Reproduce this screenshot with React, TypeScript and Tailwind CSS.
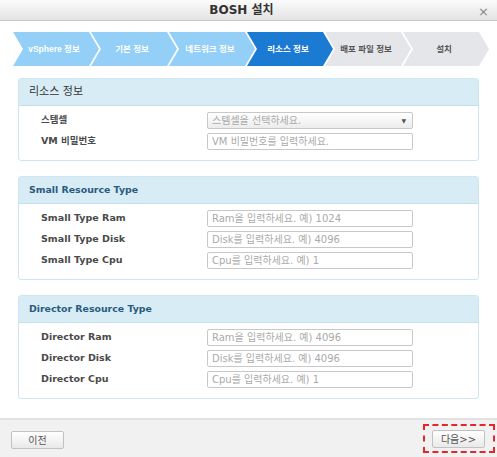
import React from "react";

const FONT = { fontFamily: '"DejaVu Sans", Verdana, "Noto Sans CJK KR", sans-serif' };
const STEPFONT = { fontFamily: '"Liberation Sans", Arial, "Noto Sans CJK KR", sans-serif' };

const steps = [
  { label: "vSphere 정보", state: "done" },
  { label: "기본 정보", state: "done" },
  { label: "네트워크 정보", state: "done" },
  { label: "리소스 정보", state: "active" },
  { label: "배포 파일 정보", state: "todo" },
  { label: "설치", state: "todo" },
];

function Step({ label, state, first }: { label: string; state: string; first: boolean }) {
  const bg =
    state === "done" ? "bg-[#93cff6]" : state === "active" ? "bg-[#1b7bd2]" : "bg-[#e4e6e9]";
  const fg = state === "todo" ? "text-[#555]" : "text-white";
  return (
    <div
      className={`${bg} ${fg} ${first ? "" : "-ml-[10px]"} w-[88px] h-[34px] flex items-center justify-center pl-0 pr-[6px] text-[8.5px] font-bold shrink-0`}
      style={{
        ...STEPFONT,
        clipPath: "polygon(0 0, 76px 0, 86px 50%, 76px 100%, 0 100%, 10px 50%)",
      }}
    >
      {label}
    </div>
  );
}

function Row({ label, placeholder, select }: { label: string; placeholder: string; select?: boolean }) {
  return (
    <div className="flex items-center h-[17px]">
      <div className="w-[188px] text-[9.5px] font-bold text-[#4a4a4a] pl-[22px] shrink-0">{label}</div>
      {select ? (
        <div className="w-[206px] h-[17px] border border-[#c8c8c8] rounded-[2px] bg-gradient-to-b from-white to-[#ececec] flex items-center justify-between pl-[4px] pr-[6px] text-[10px] text-[#aaa]">
          <span>{placeholder}</span>
          <span className="text-[6px] text-[#555]">▼</span>
        </div>
      ) : (
        <input
          readOnly
          placeholder={placeholder}
          className="w-[206px] h-[17px] border border-[#c8c8c8] rounded-[2px] bg-white px-[4px] text-[10px] placeholder:text-[#aaa] outline-none"
          style={FONT}
        />
      )}
    </div>
  );
}

function Panel({
  title,
  bold,
  rows,
}: {
  title: string;
  bold?: boolean;
  rows: { label: string; placeholder: string; select?: boolean }[];
}) {
  return (
    <div className="border border-[#cfe6f1] rounded-[3px] bg-white">
      <div
        className={`h-[27px] bg-[#d8ecf6] border-b border-[#c2e0ee] flex items-center pl-[10px] ${
          bold ? "font-bold text-[#2b5b7c] text-[9.4px]" : "text-[#333] text-[11px]"
        }`}
      >
        {title}
      </div>
      <div className="flex flex-col gap-[4px] pt-[6px] pb-[10px]">
        {rows.map((r) => (
          <Row key={r.label} {...r} />
        ))}
      </div>
    </div>
  );
}

export default function App() {
  return (
    <div className="w-[497px] h-[457px] bg-white flex flex-col overflow-hidden" style={FONT}>
      <div className="h-[21px] bg-gradient-to-b from-[#fbfbfb] to-[#e3e3e3] border-b border-[#c9c9c9] flex items-center relative shrink-0">
        <div className="flex-1 text-center text-[12px] font-bold text-[#333] pr-[14px]">BOSH 설치</div>
        <div className="absolute right-[8px] top-[2px] text-[13px] text-[#888]">×</div>
      </div>
      <div className="flex-1 flex flex-col">
        <div className="flex pl-[13px] pt-[11px]">
          {steps.map((s, i) => (
            <Step key={s.label} label={s.label} state={s.state} first={i === 0} />
          ))}
        </div>
        <div className="flex flex-col gap-[15px] px-[18px] pt-[12px] pr-[18px]">
          <Panel
            title="리소스 정보"
            rows={[
              { label: "스템셀", placeholder: "스템셀을 선택하세요.", select: true },
              { label: "VM 비밀번호", placeholder: "VM 비밀번호를 입력하세요." },
            ]}
          />
          <Panel
            title="Small Resource Type"
            bold
            rows={[
              { label: "Small Type Ram", placeholder: "Ram을 입력하세요. 예) 1024" },
              { label: "Small Type Disk", placeholder: "Disk를 입력하세요. 예) 4096" },
              { label: "Small Type Cpu", placeholder: "Cpu를 입력하세요. 예) 1" },
            ]}
          />
          <Panel
            title="Director Resource Type"
            bold
            rows={[
              { label: "Director Ram", placeholder: "Ram을 입력하세요. 예) 4096" },
              { label: "Director Disk", placeholder: "Disk를 입력하세요. 예) 4096" },
              { label: "Director Cpu", placeholder: "Cpu를 입력하세요. 예) 1" },
            ]}
          />
        </div>
      </div>
      <div className="h-[39px] shrink-0 border-t-2 border-[#e2e2e2] bg-[#f1f1f1] flex items-start justify-between pl-[11px] pr-[2px] pt-[4px]">
        <button className="mt-[7px] w-[53px] h-[18px] border border-[#c2c2c2] rounded-[2px] bg-gradient-to-b from-white to-[#e9e9e9] text-[10px] text-[#555]">
          이전
        </button>
        <div className="border-2 border-dashed border-[#e5262b] pl-[7px] pr-[8px] pt-[4px] pb-[3px]">
          <button className="w-[53px] h-[18px] border border-[#c2c2c2] rounded-[2px] bg-gradient-to-b from-white to-[#e9e9e9] text-[10px] text-[#555] block">
            다음&gt;&gt;
          </button>
        </div>
      </div>
    </div>
  );
}
